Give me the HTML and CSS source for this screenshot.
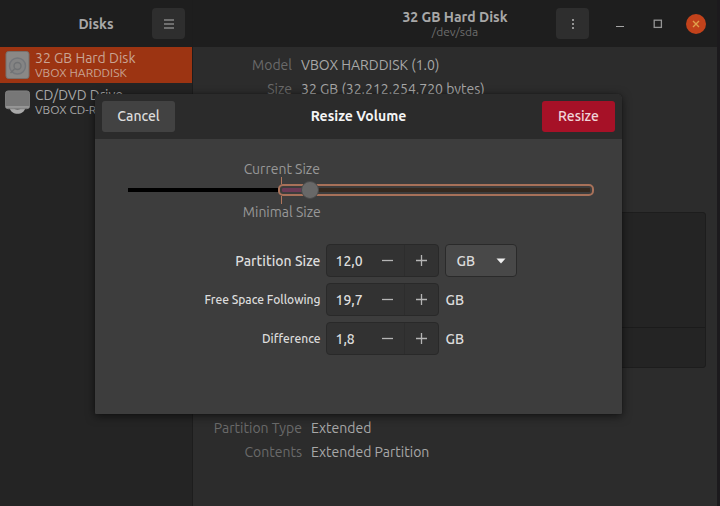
FILE: index.html
```html
<!DOCTYPE html>
<html lang="en">

<head>
  <meta charset="utf-8">
  <title>Disks</title>
  <link rel="stylesheet" href="styles.css">
</head>

<body>
  <div class="window">
    <aside class="sidebar">
      <header class="titlebar sidebar-title">
        <h1>Disks</h1>
        <button class="bar-button" type="button" aria-label="Menu">
          <svg width="10" height="10" viewBox="0 0 10 10"><path d="M0 1h10M0 5h10M0 9h10" stroke="#858585" stroke-width="1.4"/></svg>
        </button>
      </header>
      <ul class="devices">
        <li class="device active">
          <svg width="24" height="28" viewBox="0 0 24 28">
            <rect x="0.5" y="0.5" width="23" height="27" rx="2.5" fill="#8a8886" stroke="#77706c"/>
            <circle cx="12" cy="15" r="8" fill="#848484" stroke="#74767a" stroke-width="1.4"/>
            <circle cx="12" cy="15" r="3.5" fill="none" stroke="#707274" stroke-width="1.4"/>
            <path d="M5 22l4-4" stroke="#707274" stroke-width="1.5"/>
          </svg>
          <div class="device-text">
            <div class="device-name">32 GB Hard Disk</div>
            <div class="device-model">VBOX HARDDISK</div>
          </div>
        </li>
        <li class="device">
          <svg width="28" height="27" viewBox="0 0 28 27">
            <path d="M5 19h18c-1 5-5 7-9 7s-8-2-9-7z" fill="#a9a9a9"/>
            <path d="M10 20h8c-1 2-7 2-8 0z" fill="#555"/>
            <rect x="0.5" y="0.5" width="27" height="20" rx="3" fill="#777" stroke="#858585"/>
            <path d="M1 18.5h26" stroke="#999" stroke-width="2"/>
          </svg>
          <div class="device-text">
            <div class="device-name">CD/DVD Drive</div>
            <div class="device-model">VBOX CD-ROM</div>
          </div>
        </li>
      </ul>
    </aside>

    <main class="main">
      <header class="titlebar main-title">
        <div class="title">
          <h2>32 GB Hard Disk</h2>
          <p>/dev/sda</p>
        </div>
        <div class="window-buttons">
          <button class="bar-button" type="button" aria-label="Drive options">
            <svg width="4" height="10" viewBox="0 0 4 10" fill="#949494"><rect x="1" y="0" width="2" height="2"/><rect x="1" y="4" width="2" height="2"/><rect x="1" y="8" width="2" height="2"/></svg>
          </button>
          <button class="control" type="button" aria-label="Minimize">
            <svg width="10" height="10" viewBox="0 0 10 10"><path d="M1 7.5h8" stroke="#a5a5a5"/></svg>
          </button>
          <button class="control" type="button" aria-label="Maximize">
            <svg width="10" height="10" viewBox="0 0 10 10"><rect x="1.2" y="1.2" width="7.2" height="7.2" fill="none" stroke="#959595" stroke-width="1.3"/></svg>
          </button>
          <button class="control close" type="button" aria-label="Close">
            <svg width="8" height="8" viewBox="0 0 8 8"><path d="M1 1l6 6M7 1l-6 6" stroke="#e0a04c" stroke-width="1.4"/></svg>
          </button>
        </div>
      </header>
      <div class="content">
        <dl class="info drive-info">
          <dt>Model</dt>
          <dd>VBOX HARDDISK (1.0)</dd>
          <dt>Size</dt>
          <dd>32 GB (32.212.254.720 bytes)</dd>
        </dl>
        <div class="volumes">
          <div class="volume-map"></div>
          <div class="volume-toolbar"></div>
        </div>
        <dl class="info volume-info">
          <dt>Partition Type</dt>
          <dd>Extended</dd>
          <dt>Contents</dt>
          <dd>Extended Partition</dd>
        </dl>
      </div>
    </main>

    <form class="dialog" role="dialog" aria-labelledby="dialog-title">
      <header class="dialog-header">
        <button class="button" type="button">Cancel</button>
        <h2 id="dialog-title">Resize Volume</h2>
        <button class="button destructive" type="button">Resize</button>
      </header>
      <div class="dialog-body">
        <div class="scale">
          <div class="mark mark-top">Current Size</div>
          <div class="scale-row">
            <div class="scale-used"></div>
            <input class="scale-range" type="range" min="10.6" max="31.7" step="0.1" value="12" aria-label="Partition size">
          </div>
          <div class="mark mark-bottom">Minimal Size</div>
        </div>

        <div class="fields">
          <label for="size">Partition Size</label>
          <div class="spin">
            <input id="size" type="text" value="12,0">
            <button type="button" aria-label="Decrease size"><svg width="11" height="11" viewBox="0 0 11 11"><path d="M0 5.5h11"/></svg></button>
            <button type="button" aria-label="Increase size"><svg width="11" height="11" viewBox="0 0 11 11"><path d="M0 5.5h11M5.5 0v11"/></svg></button>
          </div>
          <div class="unit-select">
            <select aria-label="Unit">
              <option>GB</option>
              <option>MB</option>
            </select>
            <svg width="10" height="6" viewBox="0 0 10 6"><path d="M0.5 0.5h9L5 5.5z" fill="#eee"/></svg>
          </div>

          <label class="small" for="free">Free Space Following</label>
          <div class="spin">
            <input id="free" type="text" value="19,7">
            <button type="button" aria-label="Decrease free space"><svg width="11" height="11" viewBox="0 0 11 11"><path d="M0 5.5h11"/></svg></button>
            <button type="button" aria-label="Increase free space"><svg width="11" height="11" viewBox="0 0 11 11"><path d="M0 5.5h11M5.5 0v11"/></svg></button>
          </div>
          <span class="unit">GB</span>

          <label class="small" for="difference">Difference</label>
          <div class="spin">
            <input id="difference" type="text" value="1,8">
            <button type="button" aria-label="Decrease difference"><svg width="11" height="11" viewBox="0 0 11 11"><path d="M0 5.5h11"/></svg></button>
            <button type="button" aria-label="Increase difference"><svg width="11" height="11" viewBox="0 0 11 11"><path d="M0 5.5h11M5.5 0v11"/></svg></button>
          </div>
          <span class="unit">GB</span>
        </div>
      </div>
    </form>
  </div>
</body>

</html>
```
FILE: styles.css
```css
/* reset */
* {
  box-sizing: border-box;
  margin: 0;
  padding: 0;
}

body {
  background: #1c1a1d;
  color: #a8a8a8;
  font-family: Ubuntu, "Noto Sans", sans-serif;
  font-size: 14px;
  line-height: 16px;
}

button,
input,
select {
  border: none;
  color: inherit;
  font: inherit;
}

h1,
h2 {
  font-size: 14px;
  font-weight: 700;
}

ul {
  list-style: none;
}

svg {
  display: block;
  flex: none;
}

.window {
  position: relative;
  display: flex;
  min-height: 100vh;
  margin-right: 3px;
  overflow: hidden;
}

.titlebar {
  display: grid;
  grid-template-columns: 1fr auto 1fr;
  align-items: center;
  height: 47px;
  background: #1e1e1e;
}

.bar-button {
  display: flex;
  align-items: center;
  justify-content: center;
  width: 33px;
  height: 31px;
  border-radius: 4px;
  background: #2e2e2e;
}

/* sidebar */
.sidebar {
  width: 193px;
  flex: none;
  background: #242424;
  border-right: 1px solid #1d1d1d;
}

.sidebar-title h1 {
  grid-column: 2;
}

.sidebar-title .bar-button {
  justify-self: end;
  margin-right: 7px;
}

.devices {
  display: grid;
  gap: 1px;
}

.device {
  display: flex;
  align-items: center;
  gap: 5px;
  height: 36px;
  padding-left: 5px;
}

.device svg {
  width: 25px;
}

.device.active {
  background: #9c3412;
  color: #c9a494;
}

.device-model {
  font-size: 12px;
  line-height: 14px;
}

/* main pane */
.main {
  flex: 1;
  background: #2c2c2c;
}

.title {
  grid-column: 2;
  text-align: center;
}

.title p {
  color: #6c6c6c;
  font-size: 12px;
  line-height: 14px;
}

.window-buttons {
  display: flex;
  align-items: center;
  justify-self: end;
  gap: 18px;
  margin-right: 11px;
}

.window-buttons .bar-button {
  margin-right: 3px;
}

.control {
  display: flex;
  align-items: center;
  justify-content: center;
  width: 20px;
  height: 20px;
  border-radius: 50%;
  background: none;
}

.close {
  background: #c2421b;
}

.content {
  padding: 6px 11px 0 16px;
}

.info {
  display: grid;
  column-gap: 9px;
  line-height: 24px;
}

.info dt {
  color: #6a6a6a;
  text-align: right;
}

.drive-info {
  grid-template-columns: 83px 1fr;
}

.volume-info {
  grid-template-columns: 93px 1fr;
}

.volumes {
  margin: 111px 0 48px;
  border: 1px solid #1d1d1d;
  border-radius: 3px;
  background: #242424;
}

.volume-map {
  height: 115px;
  border-bottom: 1px solid #1b1b1b;
}

.volume-toolbar {
  height: 39px;
}

/* resize dialog */
.dialog {
  position: absolute;
  top: 94px;
  left: 95px;
  right: 95px;
  border-radius: 5px 5px 1px 1px;
  background: #3d3d3d;
  box-shadow: 0 2px 10px rgba(0, 0, 0, 0.6), 0 0 1px #1c1c1c;
  color: #dcdcdc;
}

.dialog-header {
  display: flex;
  align-items: center;
  justify-content: space-between;
  height: 45px;
  padding: 0 7px;
  border-bottom: 1px solid #2b2b2b;
  border-radius: 5px 5px 0 0;
  background: #2b2b2b;
}

.dialog-header h2 {
  color: #f4f4f4;
}

.button {
  width: 73px;
  height: 31px;
  border-radius: 3px;
  background: #424242;
  font-weight: 500;
}

.button.destructive {
  background: #a61127;
  color: #f0d5d9;
}

.dialog-body {
  padding: 22px 28px 59px 33px;
}

.scale {
  margin-bottom: 24px;
}

.mark {
  display: flex;
  flex-direction: column;
  align-items: center;
  width: 66%;
  color: #989898;
}

/* tick between the label and the track */
.mark-top::after,
.mark-bottom::before {
  content: "";
  width: 1px;
  height: 7px;
  background: #b0765c;
}

.mark-bottom::before {
  height: 8px;
}

.scale-row {
  display: grid;
  grid-template-columns: 150fr 316fr;
  align-items: center;
  height: 12px;
}

.scale-used {
  height: 4px;
  background: #000;
}

.scale-range {
  width: 100%;
  min-width: 0;
  height: 12px;
  padding: 2px;
  border: 2px solid #a87159;
  border-radius: 5px;
  background: linear-gradient(90deg, #6b3a55 8%, #35291f 8%) content-box #3a2a22;
  appearance: none;
}

.scale-range::-webkit-slider-thumb {
  width: 18px;
  height: 18px;
  border: 1px solid #4a4a4a;
  border-radius: 50%;
  background: #686868;
  appearance: none;
}

.fields {
  display: grid;
  grid-template-columns: repeat(3, max-content);
  align-items: center;
  justify-content: center;
  gap: 6px;
  font-weight: 500;
}

.fields label {
  text-align: right;
}

.fields .small {
  font-size: 12px;
}

.spin {
  display: flex;
  width: 113px;
  height: 33px;
  border: 1px solid #292929;
  border-radius: 4px;
  background: #323232;
}

.spin input {
  flex: 1;
  min-width: 0;
  padding-left: 8px;
  background: none;
}

.spin button {
  display: flex;
  align-items: center;
  justify-content: center;
  width: 34px;
  border-left: 1px solid #2d2d2d;
  background: none;
}

.spin button:first-of-type {
  border-left: none;
}

.spin path {
  stroke: #b5b5b5;
  stroke-width: 1.3;
}

.unit-select {
  display: grid;
  align-items: center;
}

.unit-select select,
.unit-select svg {
  grid-area: 1 / 1;
}

.unit-select select {
  width: 72px;
  height: 33px;
  padding-left: 10px;
  border: 1px solid #2a2a2a;
  border-radius: 4px;
  background: #484848;
  appearance: none;
}

.unit-select svg {
  justify-self: end;
  margin-right: 11px;
  pointer-events: none;
}
```
